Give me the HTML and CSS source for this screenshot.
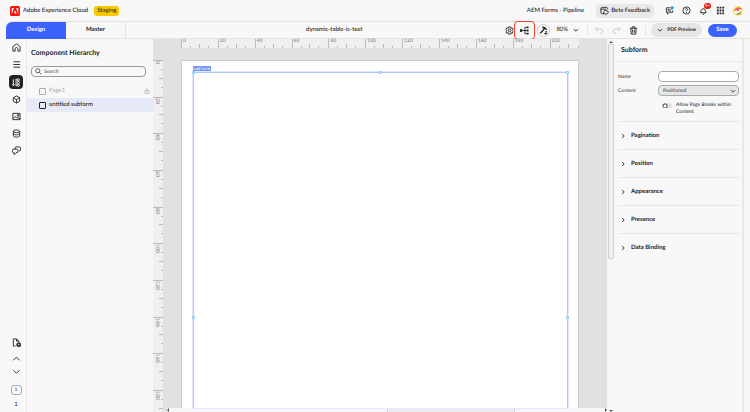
FILE: index.html
```html
<!DOCTYPE html>
<html lang="en">
<head>
<meta charset="utf-8">
<title>dynamic-table-ic-test</title>
<link rel="stylesheet" href="styles.css">
</head>
<body>
<header class="topbar">
  <svg class="logo" viewBox="0 0 20 20"><rect width="20" height="20" rx="3" fill="#f5150a"/><path d="M7.800 4H3.500v12zM12.200 4h4.300v12zM10 8.300l3.200 7.700h-2.200l-1-2.500H7.700z" fill="#fff"/></svg>
  <span class="brand">Adobe Experience Cloud</span>
  <span class="badge">Staging</span>
  <span class="spacer"></span>
  <span class="org">AEM Forms - Pipeline</span>
  <button class="beta"><svg class="ic" viewBox="0 0 20 20"><path d="M9 17H5a3 3 0 0 1-3-3V6a3 3 0 0 1 3-3h9a3 3 0 0 1 3 3v1M2 7h12M9 17c-2-4 0-7 4-7s6 2 5 5-4 3-6 3z"/></svg>Beta Feedback</button>
  <button class="tool" aria-label="Messages"><svg class="ic" viewBox="0 0 20 20"><path d="M12 4H3v10h3v4l4-4h7v-4M6 8h4M6 11h7M11 10l3-3"/><circle cx="16" cy="4" r="3.500" fill="#2490eb" stroke="none"/></svg></button>
  <button class="tool" aria-label="Help"><svg class="ic" viewBox="0 0 20 20"><circle cx="10" cy="10" r="8"/><path d="M7.500 8c0-4 5.500-3 5 0-.3 2-2.500 2-2.500 4M10 14v1.500"/></svg></button>
  <button class="tool bell" aria-label="Notifications"><svg class="ic" viewBox="0 0 20 20"><path d="M3 15c2-2 1-9 7-9 5 0 4 7 6 9zM8 17c0 2 4 2 4 0"/></svg><span class="count">9+</span></button>
  <button class="tool" aria-label="Apps"><svg class="ic" viewBox="0 0 20 20"><path d="M2 3.500h4m2 0h4m2 0h4M2 10h4m2 0h4m2 0h4M2 16.500h4m2 0h4m2 0h4" stroke-width="4"/></svg></button>
  <button class="tool" aria-label="Account"><svg class="avatar" viewBox="0 0 20 20"><circle cx="10" cy="10" r="9.500" fill="#f8d931"/><path d="M1 12C3 4 13 0 18 6L5 11z" fill="#e95778"/><path d="M2 10l12-4 5 4-7 2-8 4z" fill="#fff"/><path d="M6 17l10-6-2 6z" fill="#4b9fdd"/><path d="M7 8l4-1 2 2-4 2z" fill="#dc4b38"/></svg></button>
</header>

<div class="app">
  <div class="toolbar">
    <nav class="tabs"><button class="tab active">Design</button><button class="tab">Master</button></nav>
    <span class="doc">dynamic-table-ic-test</span>
    <div class="tools">
      <button class="tool" aria-label="Settings"><svg class="ic" viewBox="0 0 20 20"><path d="M8 2h4l1 3 3-1 2 4-2 2 2 2-2 4-3-1-1 3H8l-1-3-3 1-2-4 2-2-2-2 2-4 3 1z"/><circle cx="10" cy="10" r="3"/></svg></button>
      <button class="tool marked" aria-label="Rules"><svg class="ic" viewBox="0 0 20 20"><path d="M0 7h5v6H0z" fill="#222" stroke="none"/><path d="M5 10h6M11 3v14M11 3h4M11 10h4M11 17h4"/><path d="M15 3h4M15 10h4M15 17h4" stroke-width="4"/></svg></button>
      <button class="tool round" aria-label="Style editor"><svg class="ic" viewBox="0 0 20 20"><path d="M3 16L12 6M7 3c5-1 8 2 10 6M10 8l3-5M12 17h6M14 13h4" stroke-width="3"/></svg></button>
      <button class="zoom">80%<svg class="ic chev" viewBox="0 0 20 20"><path d="M3 7l7 7 7-7" stroke-width="3"/></svg></button>
      <span class="rule"></span>
      <button class="tool off" aria-label="Undo"><svg class="ic" viewBox="0 0 20 20"><path d="M6 3L2 7l4 4M2 7h11c6 0 6 9 0 9h-3"/></svg></button>
      <button class="tool off" aria-label="Redo"><svg class="ic" viewBox="0 0 20 20"><path d="M14 3l4 4-4 4M18 7H7c-6 0-6 9 0 9h3"/></svg></button>
      <button class="tool" aria-label="Delete"><svg class="ic" viewBox="0 0 20 20"><path d="M2 5h16M7 5V2h6v3M4 5l1 13h10l1-13M8 8v7M12 8v7"/></svg></button>
      <span class="rule"></span>
      <button class="preview"><svg class="ic chev" viewBox="0 0 20 20"><path d="M3 7l7 7 7-7" stroke-width="3"/></svg>PDF Preview</button>
      <button class="save">Save</button>
    </div>
  </div>

  <div class="main">
    <aside class="rail">
      <button class="tool" aria-label="Home"><svg class="ic" viewBox="0 0 20 20"><path d="M2 8l8-6 8 6v10h-5v-5c0-4-6-4-6 0v5H2z"/></svg></button>
      <button class="tool" aria-label="Menu"><svg class="ic" viewBox="0 0 20 20"><path d="M3 4h15M3 10h15M3 16h15"/></svg></button>
      <button class="tool on" aria-label="Hierarchy"><svg class="ic" viewBox="0 0 20 20"><path d="M3 3v14M1 14l2 3 3-3M9 3v14M8 3h3M8 17h3"/><circle cx="14" cy="4" r="2.500"/><circle cx="14" cy="10" r="2.500"/><circle cx="14" cy="16" r="2.500"/></svg></button>
      <button class="tool" aria-label="Components"><svg class="ic" viewBox="0 0 20 20"><path d="M10 2l7 4v8l-7 4-7-4V6zM3 6l7 4 7-4M10 10v8"/></svg></button>
      <button class="tool" aria-label="Assets"><svg class="ic" viewBox="0 0 20 20"><path d="M2 3h16v14H2zM2 15l5-5 4 4M11 12l7 3M12 6h3v3h-3z"/></svg></button>
      <button class="tool" aria-label="Data"><svg class="ic" viewBox="0 0 20 20"><path d="M3 5v10c0 4 14 4 14 0V5M3 10c0 4 14 4 14 0"/><ellipse cx="10" cy="5" rx="7" ry="3"/></svg></button>
      <button class="tool" aria-label="Comments"><svg class="ic" viewBox="0 0 20 20"><path d="M7 7V4c0-1 1-2 2-2h8c1 0 2 1 2 2v5c0 1-1 2-2 2h-2M3 7h8c1 0 2 1 2 2v4c0 1-1 2-2 2H9l-4 4v-4H3c-1 0-2-1-2-2V9c0-1 1-2 2-2z"/></svg></button>
      <span class="spacer"></span>
      <button class="tool" aria-label="Add page"><svg class="ic" viewBox="0 0 20 20"><path d="M8 18H3V2h7l5 5v2M10 2v5h5"/><circle cx="15" cy="15" r="4.500" fill="#333"/><path d="M13 15h4M15 13v4" stroke="#fff" stroke-width="1"/></svg></button>
      <button class="tool step" aria-label="Previous page"><svg class="ic" viewBox="0 0 20 20"><path d="M3 14l7-7 7 7"/></svg></button>
      <button class="tool step" aria-label="Next page"><svg class="ic" viewBox="0 0 20 20"><path d="M3 7l7 7 7-7"/></svg></button>
      <input class="pageno" aria-label="Page" value="1">
      <span class="pages">1</span>
    </aside>

    <section class="hierarchy">
      <h2>Component Hierarchy</h2>
      <label class="search"><svg class="ic" viewBox="0 0 20 20"><circle cx="8" cy="8" r="6"/><path d="M12.500 12.500L18 18"/></svg><input type="text" placeholder="Search" aria-label="Search"></label>
      <ul>
        <li class="muted"><label><input type="checkbox">Page1</label><svg class="ic lock" viewBox="0 0 20 20"><path d="M3 9h14v9H3zM6 9V6c0-5 8-5 8 0v3M10 12v3"/></svg></li>
        <li class="selected"><label><input type="checkbox">untitled subform</label></li>
      </ul>
    </section>

    <section class="canvas">
      <div class="vruler">
        <span>0</span><span>20</span><span>40</span><span>60</span><span>80</span><span>100</span><span>120</span><span>140</span><span>160</span><span>180</span>
      </div>
      <div class="work">
        <div class="hruler">
          <span>0</span><span>20</span><span>40</span><span>60</span><span>80</span><span>100</span><span>120</span><span>140</span><span>160</span><span>180</span><span>200</span>
        </div>
        <div class="page">
          <span class="tag">subform</span>
          <div class="selection"><i class="h nw"></i><i class="h n"></i><i class="h ne"></i><i class="h w"></i><i class="h e"></i></div>
        </div>
        <div class="hscroll"><span class="arrow left"></span><span class="thumb"></span><span class="arrow right"></span></div>
      </div>
      <div class="vscroll"><span class="arrow up"></span><span class="thumb"></span><span class="arrow down"></span></div>
    </section>

    <aside class="props">
      <h2>Subform</h2>
      <div class="fields">
        <label for="name">Name</label><input id="name" type="text">
        <label for="content">Content</label>
        <div class="pick"><select id="content"><option>Positioned</option></select><svg class="ic chev" viewBox="0 0 20 20"><path d="M3 7l7 7 7-7" stroke-width="3"/></svg></div>
        <label class="toggle"><input type="checkbox"><span>Allow Page Breaks within Content</span></label>
      </div>
      <button class="section"><svg class="ic chev" viewBox="0 0 20 20"><path d="M7 3l7 7-7 7" stroke-width="3"/></svg>Pagination</button>
      <button class="section"><svg class="ic chev" viewBox="0 0 20 20"><path d="M7 3l7 7-7 7" stroke-width="3"/></svg>Position</button>
      <button class="section"><svg class="ic chev" viewBox="0 0 20 20"><path d="M7 3l7 7-7 7" stroke-width="3"/></svg>Appearance</button>
      <button class="section"><svg class="ic chev" viewBox="0 0 20 20"><path d="M7 3l7 7-7 7" stroke-width="3"/></svg>Presence</button>
      <button class="section"><svg class="ic chev" viewBox="0 0 20 20"><path d="M7 3l7 7-7 7" stroke-width="3"/></svg>Data Binding</button>
    </aside>
  </div>
</div>
</body>
</html>
```

FILE: styles.css
```css
* { box-sizing: border-box; }
body {
  margin: 0;
  height: 100vh;
  display: flex;
  flex-direction: column;
  overflow: hidden;
  background: #f8f8f8;
  color: #222;
  font: 6px/8px Lato, "Noto Sans", sans-serif;
  text-rendering: geometricPrecision;
}
button, input, select {
  margin: 0;
  padding: 0;
  border: 0;
  background: none;
  color: inherit;
  font: inherit;
  text-rendering: inherit;
}
.spacer { flex: 1; }
.ic {
  width: 9px;
  height: 9px;
  flex: none;
  display: block;
  fill: none;
  stroke: currentColor;
  stroke-width: 2;
}
.ic.chev { width: 6px; height: 6px; }
.tool { display: flex; align-items: center; justify-content: center; }

.topbar {
  display: flex;
  align-items: center;
  height: 21px;
  padding: 0 4px 0 10px;
}
.logo { width: 10px; height: 10px; margin-right: 3px; }
.brand { font-weight: 500; }
.badge {
  margin-left: 6px;
  padding: 1px 3px;
  border-radius: 3px;
  background: #f8c800;
}
.org { font-weight: 500; }
.beta {
  display: flex;
  align-items: center;
  gap: 2px;
  height: 14px;
  margin: 0 7px 0 12px;
  padding: 0 4px;
  border-radius: 4px;
  background: #e9e9e9;
  font-weight: 500;
}
.topbar .tool { width: 17px; }
.topbar .avatar { width: 10px; height: 10px; flex: none; }
.bell { position: relative; }
.count {
  position: absolute;
  top: -3px;
  right: 1px;
  padding: 0 1px;
  border-radius: 4px;
  background: #ed1808;
  color: #fff;
  font-size: 4px;
  line-height: 6px;
  font-weight: 700;
}

.app {
  flex: 1;
  display: flex;
  flex-direction: column;
  min-height: 0;
  margin-left: 6px;
}
.toolbar {
  display: flex;
  align-items: center;
  height: 18px;
  border: solid #e4e4e4;
  border-width: 1px 0;
  border-top-left-radius: 6px;
}
.tabs { display: flex; height: 17px; }
.tab { width: 60px; border-right: 1px solid #e4e4e4; font-weight: 700; }
.tab.active {
  border: 0;
  border-top-left-radius: 6px;
  background: #3b63fb;
  color: #fff;
}
.doc { flex: 1; padding-left: 38px; text-align: center; font-weight: 500; }
.tools { display: flex; align-items: center; padding-right: 13px; }
.tools .tool { width: 17px; }
.tools .tool:first-child { width: 10px; }
.tools .marked {
  width: 21px;
  height: 19px;
  border: 1px solid #fa3c28;
  border-radius: 4px;
}
.tools .round {
  width: 13px;
  height: 13px;
  margin: 0 2px;
  border: 1px solid #ccc;
  border-radius: 50%;
}
.zoom { display: flex; align-items: center; gap: 5px; padding: 0 5px 0 4px; }
.rule { width: 1px; height: 11px; margin: 0 3px; background: #e6e6e6; }
.off { color: #c4c4c4; }
.preview {
  display: flex;
  align-items: center;
  gap: 4px;
  height: 14px;
  margin-left: 2px;
  padding: 0 6px;
  border-radius: 7px;
  background: #e6e6e6;
  font-size: 5px;
  font-weight: 700;
}
.save {
  width: 29px;
  height: 13px;
  margin-left: 6px;
  border-radius: 7px;
  background: #3b63fb;
  color: #fff;
  font-weight: 700;
}

.main { flex: 1; display: flex; min-height: 0; }

.rail {
  display: flex;
  flex-direction: column;
  align-items: center;
  width: 21px;
  padding: 2px 0 3px;
  border-right: 1px solid #e8e8e8;
}
.rail .tool { width: 14px; height: 13px; margin-bottom: 4px; flex: none; }
.rail .on { height: 14px; border-radius: 4px; background: #222; color: #fff; }
.rail .step { height: 10px; margin-bottom: 3px; }
.pageno {
  width: 11px;
  height: 10px;
  margin: 6px 0 6px;
  border: 1px solid #aaa;
  border-radius: 3px;
  text-align: center;
  font-size: 5px;
}

.hierarchy { width: 126px; }
h2 { margin: 0; font-size: 7px; line-height: 10px; font-weight: 700; }
.hierarchy h2 { padding: 9px 4px 8px; }
.search {
  display: flex;
  align-items: center;
  gap: 2px;
  height: 11px;
  margin: 0 7px 0 4px;
  padding: 0 3px;
  border: 1px solid #999;
  border-radius: 4px;
}
.search .ic { width: 7px; height: 7px; }
.search input { flex: 1; min-width: 0; outline: 0; font-size: 5px; }
.search input::placeholder { color: #444; }
.hierarchy ul { margin: 7px 0 0; padding: 0; list-style: none; }
.hierarchy li {
  display: flex;
  align-items: center;
  justify-content: space-between;
  height: 14px;
  padding: 0 3px 0 12px;
}
.hierarchy li label { display: flex; align-items: center; gap: 3px; }
.hierarchy li input {
  appearance: none;
  width: 7px;
  height: 7px;
  border: 1px solid currentColor;
  border-radius: 1px;
}
.hierarchy .muted { color: #aaa; }
.hierarchy .lock { width: 6px; height: 6px; }
.selected { background: #e5e9f8; font-weight: 500; }

.canvas { flex: 1; display: flex; min-width: 0; background: #e1e1e1; }
.vruler, .hruler { display: grid; color: #777; font-size: 5px; line-height: 5px; }
.vruler {
  width: 10px;
  padding-top: 21px;
  background: linear-gradient(#e1e1e1 21px, #efefef 21px);
  grid-template-rows: repeat(9, 20fr) 12fr;
}
.vruler span {
  --t: linear-gradient(#bbb, #bbb);
  min-height: 0;
  padding: 1px 4px 0 0;
  writing-mode: vertical-rl;
  background: var(--t) 0 0 / 100% 1px, var(--t) 100% 25% / 2px 1px,
    var(--t) 100% 50% / 4px 1px, var(--t) 100% 75% / 2px 1px;
  background-repeat: no-repeat;
}
.vruler span:last-child {
  background: var(--t) 0 0 / 100% 1px, var(--t) 100% 42% / 2px 1px,
    var(--t) 100% 84% / 4px 1px;
  background-repeat: no-repeat;
}
.work {
  flex: 1;
  display: flex;
  flex-direction: column;
  min-width: 0;
}
.hruler {
  height: 9px;
  flex: none;
  margin: 0 28px 0 18px;
  background: #efefef;
  grid-template-columns: repeat(10, 20fr) 16fr;
}
.hruler span {
  --t: linear-gradient(#bbb, #bbb);
  min-width: 0;
  padding: 0 2px;
  background: var(--t) 0 0 / 1px 100%, var(--t) 25% 100% / 1px 2px,
    var(--t) 50% 100% / 1px 4px, var(--t) 75% 100% / 1px 2px;
  background-repeat: no-repeat;
}
.hruler span:last-child {
  background: var(--t) 0 0 / 1px 100%, var(--t) 33% 100% / 1px 2px,
    var(--t) 66% 100% / 1px 4px, var(--t) 100% 100% / 1px 2px;
  background-repeat: no-repeat;
}
.page {
  flex: 1;
  display: flex;
  flex-direction: column;
  align-items: flex-start;
  min-height: 0;
  margin: 12px 28px 0 18px;
  padding: 5px 10px 0 11px;
  border: 1px solid #ccc;
  border-bottom: 0;
  background: #fff;
}
.tag {
  height: 6px;
  padding-right: 1px;
  background: #6f95f0;
  color: #fff;
  font: 4px/6px "DejaVu Sans Mono", monospace;
}
.selection {
  position: relative;
  flex: 1;
  align-self: stretch;
  border: 1px solid #b4c8fa;
  border-bottom: 0;
  outline: 1px solid #dfeafe;
}
.h {
  position: absolute;
  width: 3px;
  height: 3px;
  border: 1px solid #7fbdf2;
  border-radius: 1px;
  background: #fff;
}
.nw, .n, .ne { top: -2px; }
.w, .e { top: calc(73% - 2px); }
.nw, .w { left: -2px; }
.ne, .e { right: -2px; }
.n { left: calc(50% - 2px); }

.arrow { width: 0; height: 0; flex: none; border: 2px solid transparent; }
.up { border-bottom-color: #555; border-top: 0; }
.down { border-top-color: #555; border-bottom: 0; }
.left { border-right-color: #555; border-left: 0; }
.right { border-left-color: #555; border-right: 0; }
.vscroll {
  display: flex;
  flex-direction: column;
  align-items: center;
  justify-content: space-between;
  width: 7px;
  padding: 2px 0 0;
  background: #f6f6f6;
}
.vscroll .thumb {
  width: 6px;
  height: 58%;
  margin: 1px 0 auto;
  border: 1px solid #cfcfcf;
  border-radius: 1px;
  background: #f0f0f0;
}
.hscroll {
  display: flex;
  justify-content: space-between;
  height: 4px;
  margin-left: 4px;
  background: #f7f7f7;
}
.hscroll .thumb {
  width: 29%;
  margin-left: 29%;
  border: 1px solid #cfcfcf;
  border-bottom: 0;
  border-radius: 2px 2px 0 0;
  background: #ececec;
}

.props {
  width: 130px;
  margin-right: 6px;
  border-right: 2px solid #e8e8e8;
}
.props h2 { padding: 6px 7px; border-bottom: 1px solid #e8e8e8; }
.fields {
  display: grid;
  grid-template-columns: 36px 1fr;
  gap: 3px 4px;
  align-items: center;
  margin: 0 3px 0 4px;
  padding: 9px 0 5px;
  border-bottom: 1px solid #e6e6e6;
  color: #333;
  font-size: 5px;
}
.fields input[type="text"], .pick {
  height: 11px;
  border: 1px solid #aaa;
  border-radius: 4px;
  background: #fff;
  min-width: 0;
}
.pick {
  display: flex;
  align-items: center;
  padding: 0 2px 0 4px;
  background: #e6e6e6;
}
.pick select { flex: 1; appearance: none; outline: 0; min-width: 0; }
.toggle {
  grid-column: 2;
  display: flex;
  gap: 4px;
  padding: 3px 0 0 4px;
  line-height: 7px;
  color: #222;
}
.toggle input {
  appearance: none;
  flex: none;
  width: 10px;
  height: 5px;
  margin-top: 1px;
  border-radius: 3px;
  background: radial-gradient(circle at 3px 3px, #fff 1px, #444 2px, #e0e0e0 3px);
}
.section {
  display: flex;
  align-items: center;
  gap: 5px;
  width: calc(100% - 7px);
  height: 28px;
  margin: 0 3px 0 4px;
  padding-left: 2px;
  border-bottom: 1px solid #e6e6e6;
  font-weight: 700;
}
.section:last-child { border: 0; }
```
